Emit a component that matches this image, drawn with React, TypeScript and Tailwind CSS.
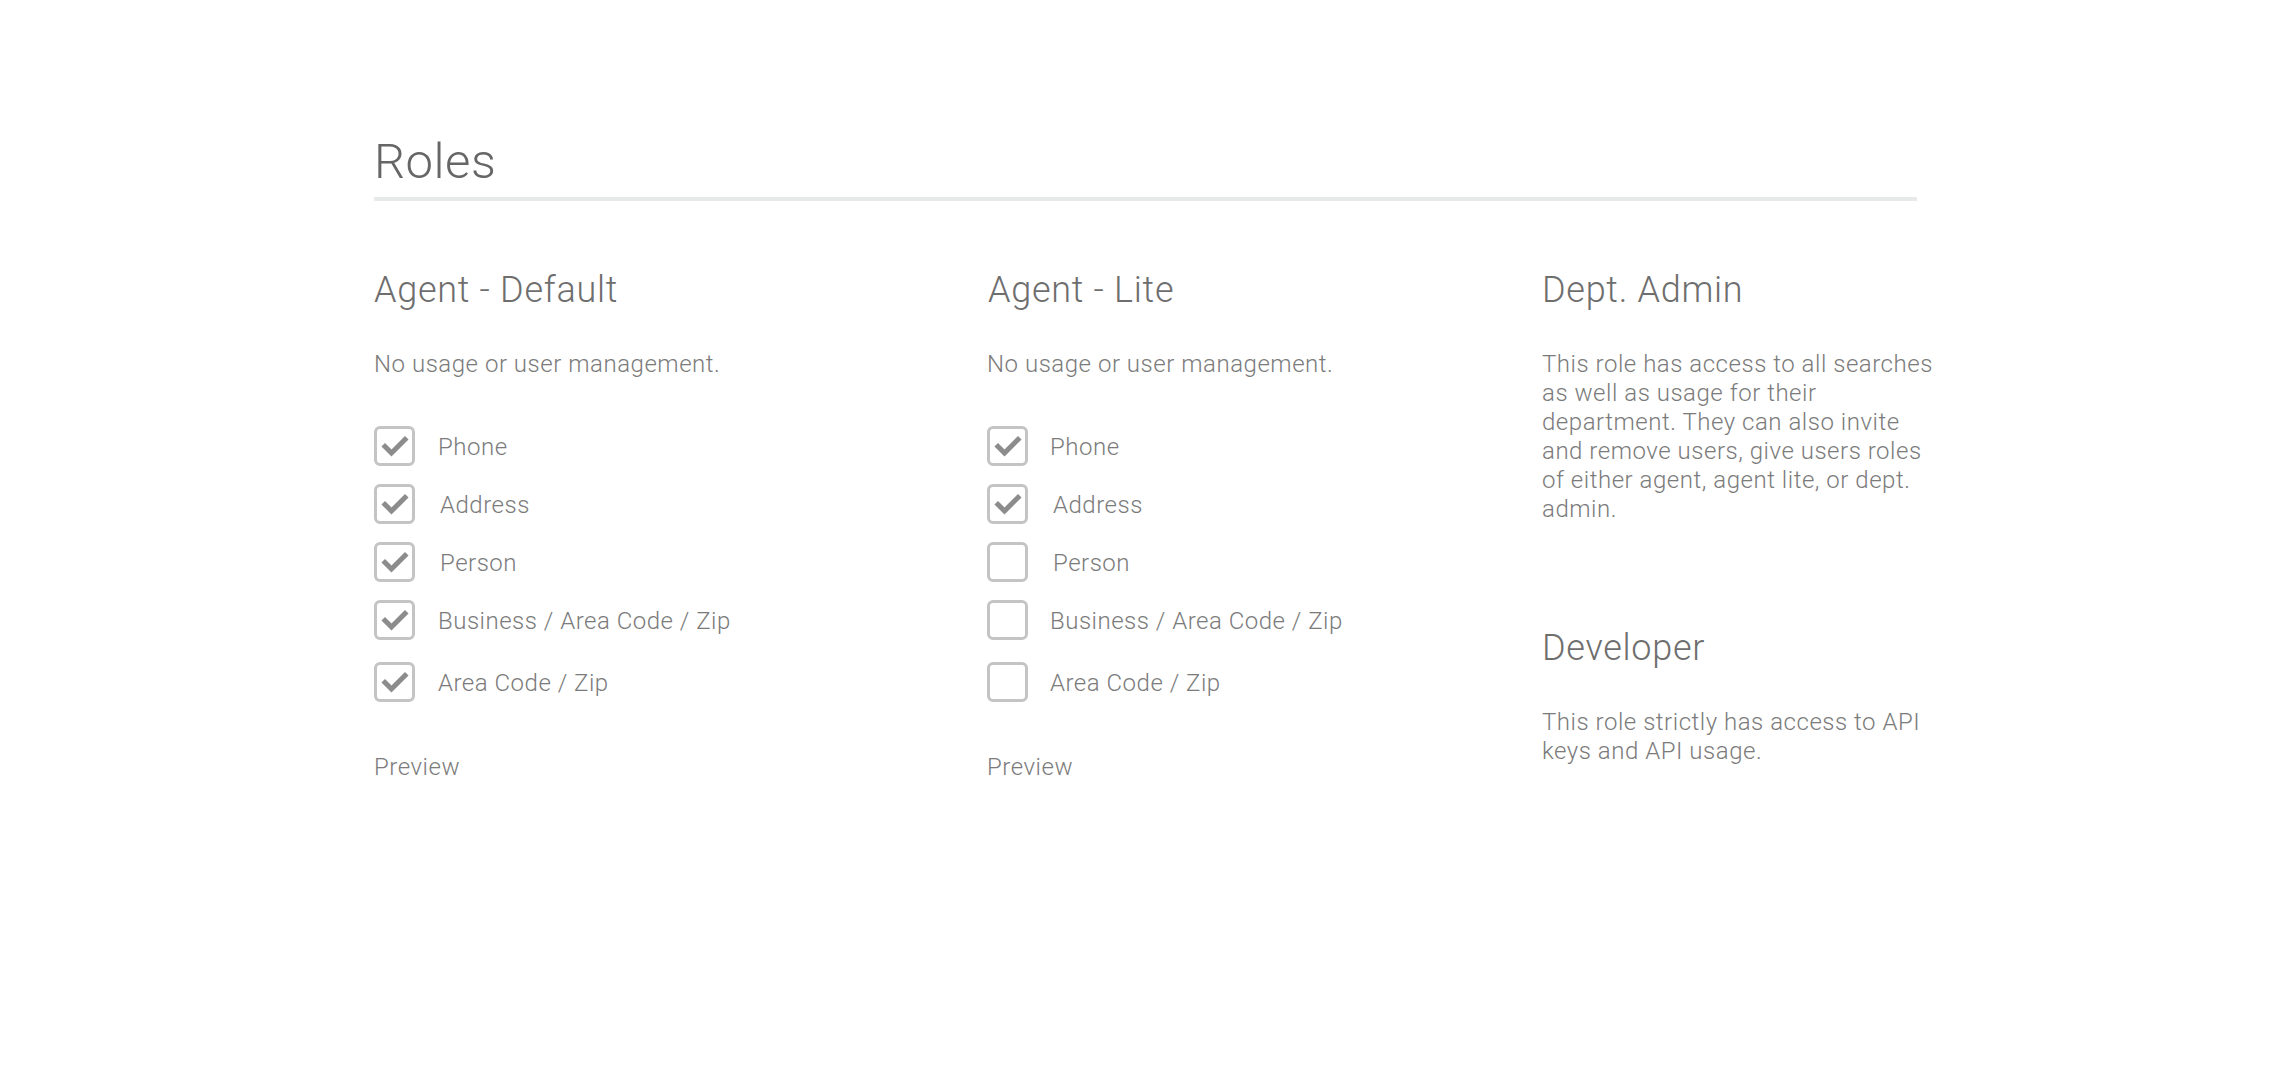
import { ReactNode } from "react";

type Perm = { label: string; on: boolean; shift?: boolean };

const defaultPerms: Perm[] = [
  { label: "Phone", on: true },
  { label: "Address", on: true, shift: true },
  { label: "Person", on: true, shift: true },
  { label: "Business / Area Code / Zip", on: true },
  { label: "Area Code / Zip", on: true },
];

const litePerms: Perm[] = [
  { label: "Phone", on: true },
  { label: "Address", on: true, shift: true },
  { label: "Person", on: false, shift: true },
  { label: "Business / Area Code / Zip", on: false },
  { label: "Area Code / Zip", on: false },
];

function Check({ on }: { on: boolean }) {
  return (
    <div className="w-[41px] h-[40px] shrink-0 rounded-[6px] border-[3px] border-[#c4c4c4] flex items-center justify-center">
      {on && (
        <svg width="30" height="30" viewBox="0 0 30 30">
          <path
            d="M5 15.5 L11.5 22 L25 8.5"
            fill="none"
            stroke="#8c8c8c"
            strokeWidth="5"
            strokeLinecap="square"
          />
        </svg>
      )}
    </div>
  );
}

function Title({ children }: { children: ReactNode }) {
  return <h2 className="text-[36px] leading-none tracking-[0.02em] text-[#6e6e6e]">{children}</h2>;
}

function Desc({ children }: { children: ReactNode }) {
  return (
    <p className="mt-[42px] text-[24px] leading-[29px] tracking-[0.022em] text-[#7b7b7b]">{children}</p>
  );
}

function RoleList({ perms, labelGap }: { perms: Perm[]; labelGap: string }) {
  return (
    <div className="mt-[47px] flex flex-col">
      {perms.map((p, i) => (
        <div
          key={p.label}
          className={
            "flex items-center " + (i === 0 ? "" : i === perms.length - 1 ? "mt-[22px]" : "mt-[18px]")
          }
        >
          <Check on={p.on} />
          <span
            className={
              "text-[24px] leading-[29px] tracking-[0.021em] text-[#7b7b7b] pt-[3px] " +
              (p.shift ? "ml-[25px]" : labelGap)
            }
          >
            {p.label}
          </span>
        </div>
      ))}
      <div className="mt-[51px] text-[24px] leading-[29px] tracking-[0.022em] text-[#7b7b7b]">Preview</div>
    </div>
  );
}

export default function App() {
  return (
    <div
      className="min-h-screen bg-white font-light pl-[374px] pt-[138px]"
      style={{ fontFamily: "Roboto, 'Liberation Sans', sans-serif" }}
    >
      <div className="w-[1543px]">
        <h1 className="text-[49px] leading-[48px] tracking-[0.01em] text-[#666666]">Roles</h1>
        <div className="mt-[11px] h-[4px] bg-[#e8e9e9]" />
      </div>

      <div className="mt-[71px] grid grid-cols-[613px_555px_400px]">
        <div>
          <Title>Agent - Default</Title>
          <Desc>No usage or user management.</Desc>
          <RoleList perms={defaultPerms} labelGap="ml-[23px]" />
        </div>

        <div>
          <div className="pl-px">
            <Title>Agent - Lite</Title>
          </div>
          <Desc>No usage or user management.</Desc>
          <RoleList perms={litePerms} labelGap="ml-[22px]" />
        </div>

        <div>
          <Title>Dept. Admin</Title>
          <Desc>
            This role has access to all searches as well as usage for their department. They can also invite and
            remove users, give users roles of either agent, agent lite, or dept. admin.
          </Desc>
          <div className="mt-[106px]">
            <Title>Developer</Title>
            <Desc>This role strictly has access to API keys and API usage.</Desc>
          </div>
        </div>
      </div>
    </div>
  );
}
